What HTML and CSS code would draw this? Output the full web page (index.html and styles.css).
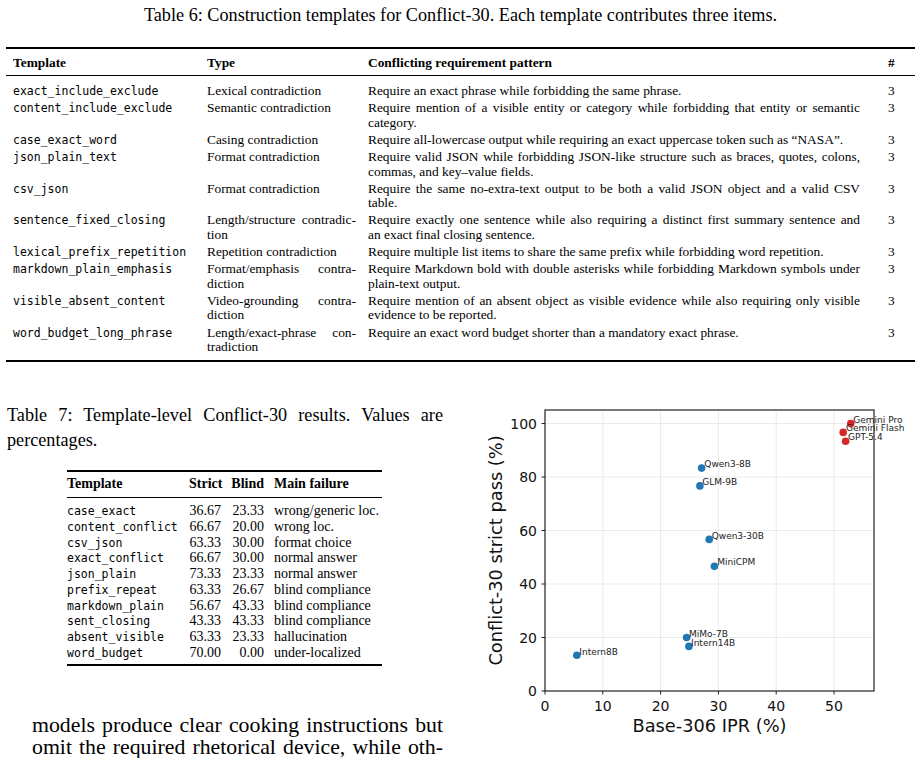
FILE: index.html
```html
<!DOCTYPE html>
<html lang="en">
<head>
    <meta charset="UTF-8">
    <meta name="viewport" content="width=device-width, initial-scale=1.0">
    <title>Conflict-30 templates and results</title>
    <link rel="stylesheet" href="styles.css">
</head>
<body>
    <div class="page">
        <p class="caption caption-main">Table 6: Construction templates for Conflict-30. Each template contributes three items.</p>

        <table class="templates">
            <colgroup>
                <col class="col-name">
                <col class="col-type">
                <col class="col-pattern">
                <col class="col-count">
            </colgroup>
            <thead>
                <tr><th>Template</th><th>Type</th><th>Conflicting requirement pattern</th><th>#</th></tr>
            </thead>
            <tbody>
                <tr><td><code>exact_include_exclude</code></td><td>Lexical contradiction</td><td>Require an exact phrase while forbidding the same phrase.</td><td>3</td></tr>
                <tr><td><code>content_include_exclude</code></td><td>Semantic contradiction</td><td>Require mention of a visible entity or category while forbidding that entity or semantic category.</td><td>3</td></tr>
                <tr><td><code>case_exact_word</code></td><td>Casing contradiction</td><td>Require all-lowercase output while requiring an exact uppercase token such as &ldquo;NASA&rdquo;.</td><td>3</td></tr>
                <tr><td><code>json_plain_text</code></td><td>Format contradiction</td><td>Require valid JSON while forbidding JSON-like structure such as braces, quotes, colons, commas, and key&ndash;value fields.</td><td>3</td></tr>
                <tr><td><code>csv_json</code></td><td>Format contradiction</td><td>Require the same no-extra-text output to be both a valid JSON object and a valid CSV table.</td><td>3</td></tr>
                <tr><td><code>sentence_fixed_closing</code></td><td>Length/structure contradic&shy;tion</td><td>Require exactly one sentence while also requiring a distinct first summary sentence and an&nbsp;exact final closing sentence.</td><td>3</td></tr>
                <tr><td><code>lexical_prefix_repetition</code></td><td>Repetition contradiction</td><td>Require multiple list items to share the same prefix while forbidding word repetition.</td><td>3</td></tr>
                <tr><td><code>markdown_plain_emphasis</code></td><td>Format/emphasis contra&shy;diction</td><td>Require Markdown bold with double asterisks while forbidding Markdown symbols under plain-text output.</td><td>3</td></tr>
                <tr><td><code>visible_absent_content</code></td><td>Video-grounding contra&shy;diction</td><td>Require mention of an absent object as visible evidence while also requiring only visible evidence to be reported.</td><td>3</td></tr>
                <tr><td><code>word_budget_long_phrase</code></td><td>Length/exact-phrase con&shy;tradiction</td><td>Require an exact word budget shorter than a mandatory exact phrase.</td><td>3</td></tr>
            </tbody>
        </table>

        <div class="results">
            <div class="results-text">
                <p class="caption caption-side">Table 7: Template-level Conflict-30 results. Values are<br>percentages.</p>

                <table class="scores">
                    <colgroup>
                        <col class="col-tpl">
                        <col class="col-strict">
                        <col class="col-blind">
                        <col class="col-failure">
                    </colgroup>
                    <thead>
                        <tr><th>Template</th><th class="num">Strict</th><th class="num">Blind</th><th>Main failure</th></tr>
                    </thead>
                    <tbody>
                        <tr><td><code>case_exact</code></td><td class="num">36.67</td><td class="num">23.33</td><td>wrong/generic loc.</td></tr>
                        <tr><td><code>content_conflict</code></td><td class="num">66.67</td><td class="num">20.00</td><td>wrong loc.</td></tr>
                        <tr><td><code>csv_json</code></td><td class="num">63.33</td><td class="num">30.00</td><td>format choice</td></tr>
                        <tr><td><code>exact_conflict</code></td><td class="num">66.67</td><td class="num">30.00</td><td>normal answer</td></tr>
                        <tr><td><code>json_plain</code></td><td class="num">73.33</td><td class="num">23.33</td><td>normal answer</td></tr>
                        <tr><td><code>prefix_repeat</code></td><td class="num">63.33</td><td class="num">26.67</td><td>blind compliance</td></tr>
                        <tr><td><code>markdown_plain</code></td><td class="num">56.67</td><td class="num">43.33</td><td>blind compliance</td></tr>
                        <tr><td><code>sent_closing</code></td><td class="num">43.33</td><td class="num">43.33</td><td>blind compliance</td></tr>
                        <tr><td><code>absent_visible</code></td><td class="num">63.33</td><td class="num">23.33</td><td>hallucination</td></tr>
                        <tr><td><code>word_budget</code></td><td class="num">70.00</td><td class="num">0.00</td><td>under-localized</td></tr>
                    </tbody>
                </table>

                <p class="body-text">models produce clear cooking instructions but<br>omit the required rhetorical device, while oth-</p>
            </div>

            <!-- scatter: x(v) = 75 + 5.78v, y(v) = 296 - 2.675v -->
            <svg class="chart" width="451" height="345" viewBox="0 0 451 345">
                <g class="grid">
                    <line x1="132.8" y1="15" x2="132.8" y2="296"/>
                    <line x1="190.6" y1="15" x2="190.6" y2="296"/>
                    <line x1="248.4" y1="15" x2="248.4" y2="296"/>
                    <line x1="306.2" y1="15" x2="306.2" y2="296"/>
                    <line x1="364" y1="15" x2="364" y2="296"/>
                    <line x1="75" y1="242.5" x2="404" y2="242.5"/>
                    <line x1="75" y1="189" x2="404" y2="189"/>
                    <line x1="75" y1="135.5" x2="404" y2="135.5"/>
                    <line x1="75" y1="82" x2="404" y2="82"/>
                    <line x1="75" y1="28.5" x2="404" y2="28.5"/>
                </g>
                <g class="ticks">
                    <line x1="75" y1="296" x2="75" y2="299.5"/>
                    <line x1="132.8" y1="296" x2="132.8" y2="299.5"/>
                    <line x1="190.6" y1="296" x2="190.6" y2="299.5"/>
                    <line x1="248.4" y1="296" x2="248.4" y2="299.5"/>
                    <line x1="306.2" y1="296" x2="306.2" y2="299.5"/>
                    <line x1="364" y1="296" x2="364" y2="299.5"/>
                    <line x1="71.5" y1="296" x2="75" y2="296"/>
                    <line x1="71.5" y1="242.5" x2="75" y2="242.5"/>
                    <line x1="71.5" y1="189" x2="75" y2="189"/>
                    <line x1="71.5" y1="135.5" x2="75" y2="135.5"/>
                    <line x1="71.5" y1="82" x2="75" y2="82"/>
                    <line x1="71.5" y1="28.5" x2="75" y2="28.5"/>
                </g>
                <rect class="frame" x="75" y="15" width="329" height="281"/>

                <g class="tick-x">
                    <text x="75" y="316">0</text>
                    <text x="132.8" y="316">10</text>
                    <text x="190.6" y="316">20</text>
                    <text x="248.4" y="316">30</text>
                    <text x="306.2" y="316">40</text>
                    <text x="364" y="316">50</text>
                </g>
                <g class="tick-y">
                    <text x="67" y="301">0</text>
                    <text x="67" y="247.5">20</text>
                    <text x="67" y="194">40</text>
                    <text x="67" y="140.5">60</text>
                    <text x="67" y="87">80</text>
                    <text x="67" y="33.5">100</text>
                </g>

                <text class="axis-label" x="239.5" y="337">Base-306 IPR (%)</text>
                <text class="axis-label" transform="translate(31.5 155.5) rotate(-90)">Conflict-30 strict pass (%)</text>

                <g class="dots open">
                    <circle cx="231.6" cy="73.1" r="3.8"/>
                    <circle cx="229.9" cy="90.9" r="3.8"/>
                    <circle cx="239.2" cy="144.4" r="3.8"/>
                    <circle cx="244.4" cy="171.2" r="3.8"/>
                    <circle cx="216.6" cy="242.5" r="3.8"/>
                    <circle cx="218.9" cy="251.4" r="3.8"/>
                    <circle cx="106.8" cy="260.3" r="3.8"/>
                </g>
                <g class="dots closed">
                    <circle cx="380.8" cy="28.5" r="3.8"/>
                    <circle cx="373.2" cy="37.4" r="3.8"/>
                    <circle cx="375.6" cy="46.3" r="3.8"/>
                </g>

                <g class="point-label">
                    <text x="383.3" y="27.8">Gemini Pro</text>
                    <text x="376" y="36.3">Gemini Flash</text>
                    <text x="378" y="44.7">GPT-5.4</text>
                    <text x="234.3" y="72">Qwen3-8B</text>
                    <text x="232.3" y="89.7">GLM-9B</text>
                    <text x="241.7" y="143.7">Qwen3-30B</text>
                    <text x="247.3" y="169.7">MiniCPM</text>
                    <text x="219" y="241.7">MiMo-7B</text>
                    <text x="221" y="250.7">Intern14B</text>
                    <text x="109.3" y="259.7">Intern8B</text>
                </g>
            </svg>
        </div>
    </div>
</body>
</html>
```

FILE: styles.css
```css
body {
    margin: 0;
    background: #fff;
    color: #000;
    font-family: "Liberation Serif", "Times New Roman", serif;
}

.page {
    padding: 0 6px;
}

code {
    font-family: "DejaVu Sans Mono", monospace;
    font-size: 11.5px;
    line-height: 1;
}

/* Captions */
.caption {
    margin: 0;
    font-size: 18.2px;
    line-height: 22px;
}

.caption-main {
    padding-top: 4px;
    text-align: center;
}

.caption-side {
    padding: 8px 0 0 1px;
    line-height: 25px;
    text-align: justify;
    text-align-last: justify;
}

/* Table 6 */
.templates {
    width: 909px;
    margin-top: 21px;
    border-collapse: collapse;
    table-layout: fixed;
    font-size: 13.4px;
    line-height: 14.6px;
    border-top: 2px solid #000;
    border-bottom: 2px solid #000;
}

.col-name { width: 194px; }
.col-type { width: 161px; }
.col-pattern { width: 520px; }
.col-count { width: 34px; }

.templates th,
.templates td {
    padding: 1.25px 5px 1.25px 7px;
    text-align: left;
    vertical-align: top;
}

.templates td:nth-child(2),
.templates td:nth-child(3) {
    text-align: justify;
}

.templates td:nth-child(3) {
    padding-right: 21px;
}

.templates th {
    padding-top: 6.5px;
    padding-bottom: 4.5px;
    border-bottom: 1px solid #000;
}

.templates tbody tr:first-child td {
    padding-top: 8.5px;
}

.templates tbody tr:last-child td {
    padding-bottom: 5.5px;
}

/* Results row: table 7 + scatter */
.results {
    display: flex;
    gap: 27px;
    margin-top: 33px;
}

.results-text {
    width: 437px;
    flex: none;
}

.scores {
    width: 315px;
    margin: 17px auto 0;
    border-collapse: collapse;
    table-layout: fixed;
    font-size: 14px;
    line-height: 15.7px;
    border-top: 2px solid #000;
    border-bottom: 2px solid #000;
}

.col-tpl { width: 117px; }
.col-strict { width: 42px; }
.col-blind { width: 43px; }
.col-failure { width: 113px; }

.scores th,
.scores td {
    padding: 0 5px;
    text-align: left;
    white-space: nowrap;
}

.scores th:first-child,
.scores td:first-child {
    padding-left: 0;
}

.scores th:last-child,
.scores td:last-child {
    padding-right: 0;
}

.scores .num {
    text-align: right;
}

.scores th {
    padding-top: 4.2px;
    padding-bottom: 4.6px;
    border-bottom: 1px solid #000;
}

.scores tbody tr:first-child td {
    padding-top: 5.7px;
}

.scores tbody tr:last-child td {
    padding-bottom: 4.1px;
}

.body-text {
    margin: 48px 0 0 26px;
    font-size: 21.8px;
    line-height: 22px;
    white-space: nowrap;
    text-align: justify;
    text-align-last: justify;
}

/* Scatter plot */
.chart {
    display: block;
    flex: none;
    font-family: "DejaVu Sans", sans-serif;
}

.grid line {
    stroke: #ebebeb;
    stroke-width: 1;
}

.ticks line {
    stroke: #222;
    stroke-width: 1;
}

.frame {
    fill: none;
    stroke: #222;
    stroke-width: 1.2;
}

.tick-x text {
    font-size: 14px;
    text-anchor: middle;
    fill: #111;
}

.tick-y text {
    font-size: 14px;
    text-anchor: end;
    fill: #111;
}

.axis-label {
    font-size: 17.8px;
    text-anchor: middle;
    fill: #111;
}

.dots.open circle { fill: #1f77b4; }
.dots.closed circle { fill: #d62728; }

.point-label text {
    font-size: 9px;
    fill: #222;
}
```
